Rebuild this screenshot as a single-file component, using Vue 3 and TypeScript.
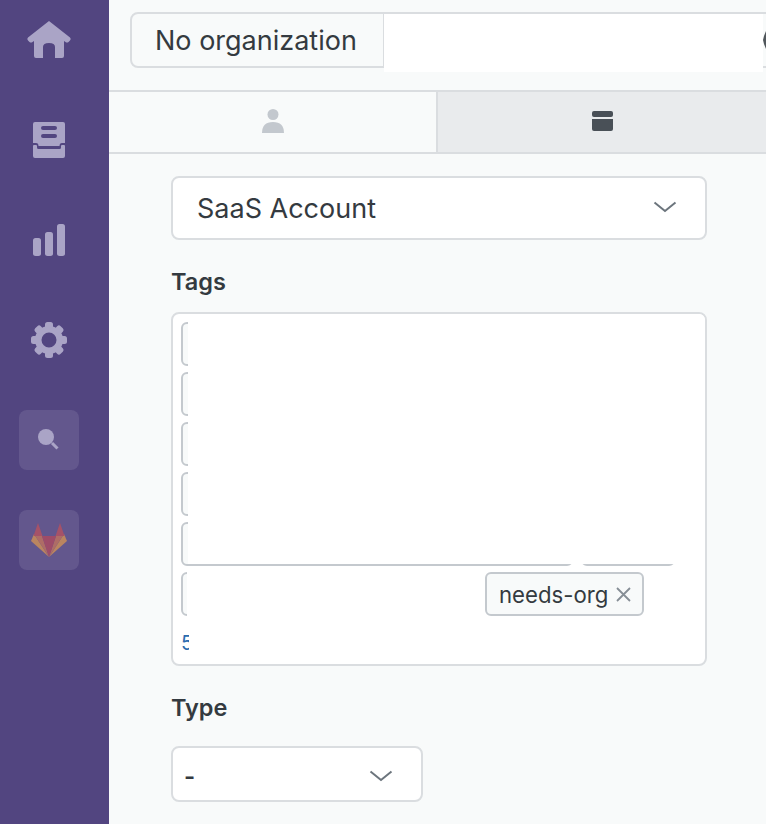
<script setup lang="ts">
const tags: number[] = [480, 480, 480, 480, 392, 94, 296]
const gearAngles: number[] = [0, 45, 90, 135, 180, 225, 270, 315]
</script>

<template>
  <div class="app">
    <nav class="rail">
      <a class="rail-item home">
        <svg width="46" height="40" viewBox="0 0 46 40"><path d="M23 1 L44 17.500 Q45.500 19 44 20.500 L42.500 22 Q41 23.200 39.500 22 L38 21 V36 Q38 38 36 38 H29 V27 Q29 23 23 23 Q17 23 17 27 V38 H10 Q8 38 8 36 V21 L6.500 22 Q5 23.200 3.500 22 L2 20.500 Q0.500 19 2 17.500 Z" fill="#aaa4c6"/></svg>
      </a>
      <a class="rail-item">
        <svg width="32" height="36" viewBox="0 0 32 36"><path fill-rule="evenodd" d="M2 0 H30 Q32 0 32 2 V21 L29 21 Q26.500 21 26.500 24 H5.500 Q5.500 21 3 21 L0 21 V2 Q0 0 2 0 Z M10 4 Q8 4 8 6 Q8 8 10 8 H22 Q24 8 24 6 Q24 4 22 4 Z M10 12 Q8 12 8 14 Q8 16 10 16 H22 Q24 16 24 14 Q24 12 22 12 Z" fill="#aaa4c6"/><path d="M0 24 Q0 23 1 23 H3 Q4 23 4 24 V25.500 Q4 27 5.500 27 H26.500 Q28 27 28 25.500 V24 Q28 23 29 23 H31 Q32 23 32 24 V34 Q32 36 30 36 H2 Q0 36 0 34 Z" fill="#aaa4c6"/></svg>
      </a>
      <a class="rail-item">
        <svg width="32" height="32" viewBox="0 0 32 32" fill="#aaa4c6"><rect x="0" y="14" width="8" height="18" rx="2.500"/><rect x="12" y="8" width="8" height="24" rx="2.500"/><rect x="24" y="0" width="8" height="32" rx="2.500"/></svg>
      </a>
      <a class="rail-item">
        <svg width="36" height="36" viewBox="0 0 36 36"><g fill="#aaa4c6"><path fill-rule="evenodd" d="M18 4 A14 14 0 1 0 18 32 A14 14 0 1 0 18 4 Z M18 10.500 A7.500 7.500 0 1 1 18 25.500 A7.500 7.500 0 1 1 18 10.500 Z"/><rect v-for="a in gearAngles" :key="a" x="14" y="0" width="8" height="7" rx="2.500" :transform="`rotate(${a} 18 18)`"/></g></svg>
      </a>
      <a class="rail-tile search">
        <svg width="22" height="22" viewBox="0 0 22 22"><circle cx="8" cy="8" r="8" fill="#aaa4c6"/><path d="M14 14 L19.500 19.500" stroke="#aaa4c6" stroke-width="3"/></svg>
      </a>
      <a class="rail-tile fox">
        <svg width="36" height="34" viewBox="0 0 36 34">
          <path d="M0 18 L3 11 L18 34 Z" fill="#ba8560"/>
          <path d="M36 18 L33 11 L18 34 Z" fill="#ba8560"/>
          <path d="M3 11 L11 13 L18 34 Z" fill="#ae6c66"/>
          <path d="M33 11 L25 13 L18 34 Z" fill="#ae6c66"/>
          <path d="M11 13 H25 L18 34 Z" fill="#9e4c68"/>
          <path d="M2.500 13 L7 0 L11.500 13 Z" fill="#a55268"/>
          <path d="M33.500 13 L29 0 L24.500 13 Z" fill="#a55268"/>
        </svg>
      </a>
    </nav>

    <main class="main">
      <header class="topbar">
        <div class="org-group">
          <span class="org-label">No organization</span>
        </div>
        <div class="cover cover-top"></div>
        <svg class="cut-icon" width="3" height="20" viewBox="0 0 3 20"><path d="M3 1 L1 6 L0 10 L1 14 L3 19 Z" fill="#343a40" opacity="0.85"/></svg>
      </header>

      <div class="tabs">
        <button class="tab">
          <svg width="22" height="24" viewBox="0 0 22 24" fill="#c3c8ce"><ellipse cx="11" cy="5.500" rx="5.500" ry="5.500"/><path d="M0 24 Q0 13 11 13 Q22 13 22 24 Z"/></svg>
        </button>
        <button class="tab active">
          <svg width="21" height="20" viewBox="0 0 21 20" fill="#495057"><rect width="21" height="6" rx="2"/><path d="M0 8 H21 V18 Q21 20 19 20 H2 Q0 20 0 18 Z"/></svg>
        </button>
      </div>

      <section class="form">
        <div class="select large">
          <span>SaaS Account</span>
          <svg class="chev" width="24" height="12" viewBox="0 0 24 12"><path d="M1.500 1.500 L12 10 L22.500 1.500" fill="none" stroke="#6c757d" stroke-width="2"/></svg>
        </div>

        <label class="label tags-label">Tags</label>
        <div class="tagbox">
          <div class="tag-rows">
            <span v-for="(w, i) in tags" :key="i" class="tag" :style="{ width: w + 'px' }"></span>
            <span class="tag named">needs-org
              <svg width="15" height="15" viewBox="0 0 15 15"><path d="M1 1 L14 14 M14 1 L1 14" stroke="#868e96" stroke-width="1.800"/></svg>
            </span>
          </div>
          <a class="more">5</a>
          <div class="cover cover-tags"></div>
          <div class="cover cover-row"></div>
          <div class="cover cover-more"></div>
        </div>

        <label class="label type-label">Type</label>
        <div class="select small">
          <span class="dash">-</span>
          <svg class="chev" width="24" height="12" viewBox="0 0 24 12"><path d="M1.500 1.500 L12 10 L22.500 1.500" fill="none" stroke="#6c757d" stroke-width="2"/></svg>
        </div>
      </section>
    </main>
  </div>
</template>

<style>
html, body { margin: 0; background: #f8fafa; overflow: hidden; }
</style>

<style scoped>
.app {
  display: flex;
  width: 766px;
  height: 824px;
  overflow: hidden;
  font-family: Inter, "Noto Sans", sans-serif;
  color: #343a40;
}
.rail {
  flex: 0 0 109px;
  background: #524580;
  display: flex;
  flex-direction: column;
  align-items: center;
}
.rail-item {
  height: 100px;
  flex: 0 0 100px;
  display: flex;
  align-items: center;
  justify-content: center;
  margin-left: -11px;
  width: 60px;
}
.rail-item.home { margin-top: -10px; }
.rail-tile {
  width: 60px;
  height: 60px;
  flex: 0 0 60px;
  margin-left: -11px;
  border-radius: 8px;
  background: rgba(255, 255, 255, 0.1);
  display: flex;
  align-items: center;
  justify-content: center;
}
.rail-tile.search { margin-top: 20px; margin-bottom: 40px; }
.main {
  flex: 1;
  min-width: 0;
  background: #f8fafa;
  display: flex;
  flex-direction: column;
}
.topbar {
  position: relative;
  height: 90px;
  flex: 0 0 90px;
  padding: 12px 0 0 21px;
  box-sizing: border-box;
}
.org-group {
  width: 700px;
  height: 56px;
  box-sizing: border-box;
  border: 2px solid #dadde0;
  border-radius: 8px 0 0 8px;
  display: flex;
}
.org-label {
  box-sizing: border-box;
  width: 253px;
  height: 100%;
  padding-left: 23px;
  border-right: 2px solid #dadde0;
  display: flex;
  align-items: center;
  font-size: 27px;
  line-height: 1;
  white-space: nowrap;
}
.cover { position: absolute; background: #fff; }
.cover-top { left: 275px; top: 14px; width: 379px; height: 58px; }
.cut-icon { position: absolute; left: 654px; top: 30px; }
.tabs {
  display: flex;
  height: 64px;
  flex: 0 0 64px;
  box-sizing: border-box;
  border-top: 2px solid #dadde0;
  border-bottom: 2px solid #dadde0;
}
.tab {
  flex: 0 0 327px;
  padding: 0;
  border: 0;
  background: transparent;
  display: flex;
  align-items: center;
  justify-content: center;
}
.tab svg { margin-top: -2px; }
.tab.active {
  flex: 1;
  background: #e9ebed;
  border-left: 2px solid #dadde0;
}
.form {
  padding: 22px 0 0 62px;
  width: 536px;
}
.select {
  box-sizing: border-box;
  background: #fff;
  border: 2px solid #dadde0;
  border-radius: 8px;
  display: flex;
  align-items: center;
  justify-content: space-between;
}
.select.large {
  width: 536px;
  height: 64px;
  padding: 0 28px 0 24px;
  font-size: 27px;
}
.select.large .chev { margin-top: -2px; }
.select.small {
  width: 252px;
  height: 56px;
  padding: 0 28px 0 11px;
  font-size: 24px;
}
.select.small .chev { margin-top: 4px; }
.dash { font-weight: 600; margin-top: 4px; }
.label {
  display: block;
  font-size: 23.500px;
  line-height: 28px;
  font-weight: 600;
}
.tags-label { margin-top: 28px; margin-bottom: 16px; }
.type-label { margin-top: 28px; margin-bottom: 24px; }
.tagbox {
  position: relative;
  width: 536px;
  height: 354px;
  box-sizing: border-box;
  background: #fff;
  border: 2px solid #dadde0;
  border-radius: 8px;
  padding: 8px 8px 0;
}
.tag-rows { display: flex; flex-wrap: wrap; gap: 6px 8px; width: 500px; }
.tag {
  box-sizing: border-box;
  height: 44px;
  background: #f8fafa;
  border: 2px solid #c4c9ce;
  border-radius: 6px;
  display: inline-flex;
  align-items: center;
  gap: 8px;
}
.tag.named {
  width: auto;
  padding: 0 11px 0 12px;
  font-size: 22.200px;
  white-space: nowrap;
}
.more {
  display: block;
  margin-top: 15px;
  font-size: 20px;
  line-height: 24px;
  color: #2b6cb0;
}
.cover-tags { left: 15px; top: 0; right: 0; height: 250px; border-radius: 0 6px 0 0; }
.cover-row { left: 14px; top: 252px; width: 298px; height: 50px; }
.cover-more { left: 16px; top: 310px; width: 60px; height: 40px; }
</style>
